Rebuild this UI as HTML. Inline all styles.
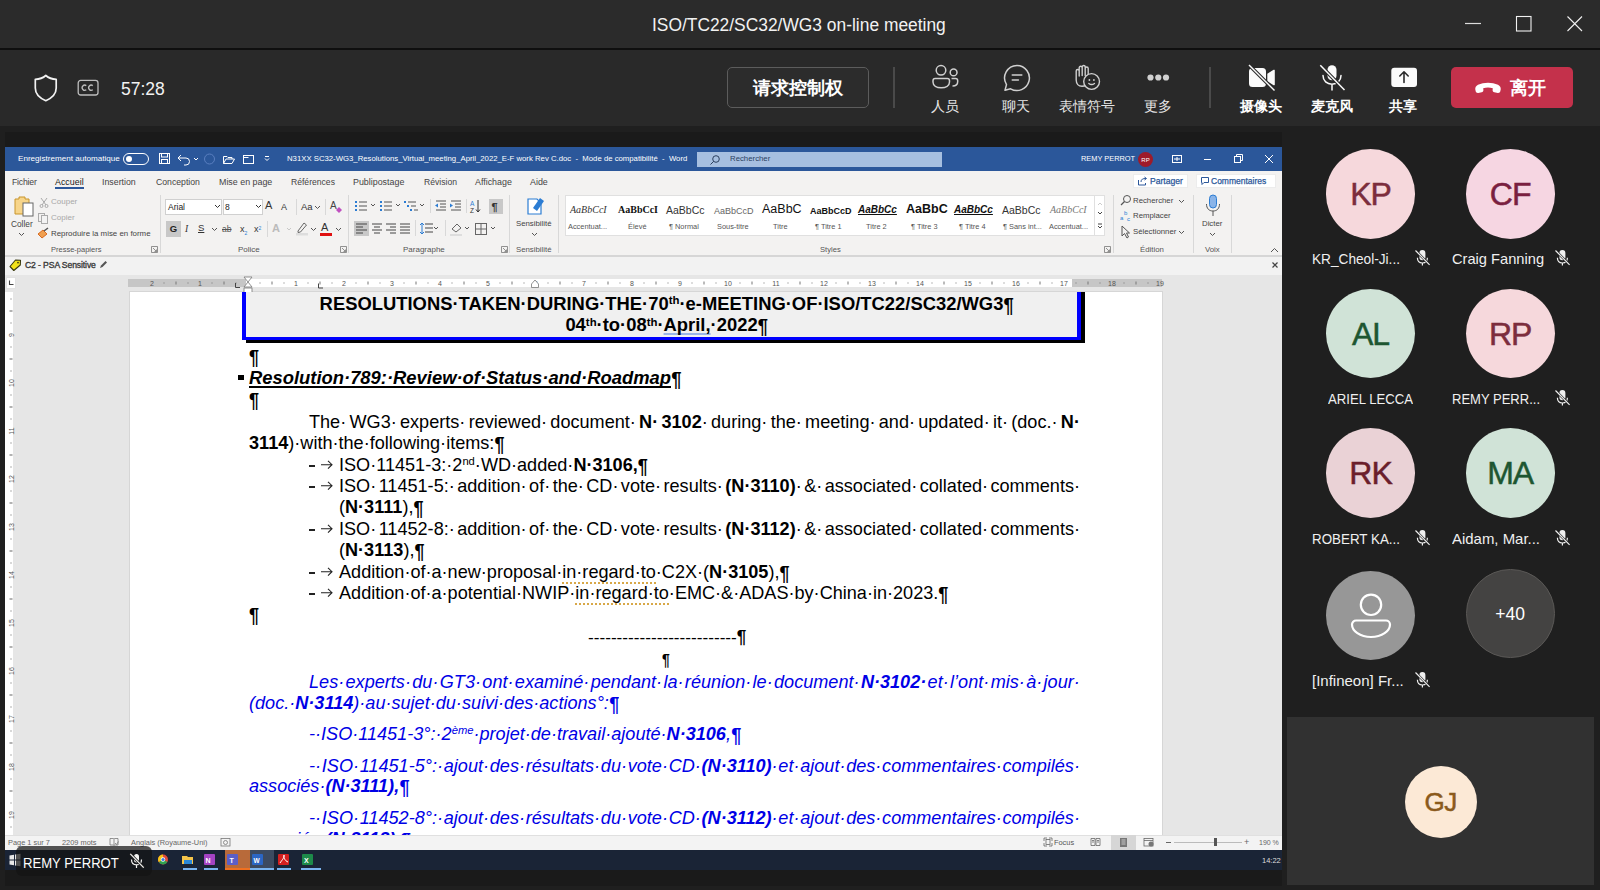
<!DOCTYPE html>
<html><head><meta charset="utf-8">
<style>
*{box-sizing:border-box}
html,body{margin:0;padding:0}
body{width:1600px;height:890px;overflow:hidden;position:relative;background:#1f1f1f;font-family:"Liberation Sans",sans-serif;}
.a{position:absolute}
.pre{white-space:pre}
/* teams */
#tbar{left:0;top:0;width:1600px;height:48px;background:#2b2b2b}
#tsep{left:0;top:48px;width:1600px;height:2px;background:#0f0f0f}
#tool{left:0;top:50px;width:1600px;height:76px;background:#292929}
.tl{color:#e6e6e6;font-size:14px;line-height:14px;text-align:center}
.tlb{color:#fff;font-weight:600}
/* word */
#word{left:5px;top:147px;width:1277px;height:723px;background:#e6e6e6;overflow:hidden}
.w{font-size:9px;line-height:10px;color:#444;white-space:pre}
.doc{font-size:18.1px;line-height:20px;color:#000;white-space:pre}
.blue{color:#0000e6;font-style:italic}
.jl{display:flex;justify-content:space-between}
sup{font-size:0.62em;line-height:0;vertical-align:0;position:relative;top:-0.5em}
.av{border-radius:50%;text-align:center}
.pm{font-weight:bold;display:inline-block;transform:scaleY(1.14);transform-origin:50% 3.4px}
.nm{color:#f0f0f0;font-size:15px;line-height:16px;white-space:pre}
</style></head><body>
<!-- TEAMS TITLE BAR -->
<div id="tbar" class="a"></div>
<div id="tsep" class="a"></div>
<div id="tool" class="a"></div>
<div class="a" style="left:5px;top:132px;width:1277px;height:754px;background:#1a1a1a"></div>
<div class="a pre" style="left:652px;top:15px;font-size:18.3px;line-height:20px;color:#f2f2f2;transform:scaleX(0.951);transform-origin:0 0">ISO/TC22/SC32/WG3 on-line meeting</div>
<svg class="a" style="left:1460px;top:10px" width="130" height="28" viewBox="0 0 130 28">
 <line x1="5" y1="13.5" x2="21" y2="13.5" stroke="#dcdcdc" stroke-width="1.2"/>
 <rect x="56.5" y="6.5" width="14.5" height="14.5" fill="none" stroke="#f0f0f0" stroke-width="1.1"/>
 <path d="M107.5 6.5 L122 21 M122 6.5 L107.5 21" stroke="#f0f0f0" stroke-width="1.1"/>
</svg>
<!-- toolbar left -->
<svg class="a" style="left:33px;top:73px" width="28" height="30" viewBox="0 0 28 30">
 <path d="M12.8 2.5 C10 5 6 6.2 2.3 6.3 V15 C2.3 21 6.5 25 12.8 27.7 C19 25 23.2 21 23.2 15 V6.3 C19.5 6.2 15.6 5 12.8 2.5 Z" fill="none" stroke="#f2f2f2" stroke-width="1.7" stroke-linejoin="round"/>
</svg>
<svg class="a" style="left:76px;top:78px" width="24" height="20" viewBox="0 0 24 20">
 <rect x="2.2" y="2.4" width="19.8" height="14.6" rx="2.5" fill="none" stroke="#bdbdbd" stroke-width="1.3"/>
 <path d="M10.3 7.6 A2.6 2.6 0 1 0 10.3 11.8 M16.8 7.6 A2.6 2.6 0 1 0 16.8 11.8" fill="none" stroke="#bdbdbd" stroke-width="1.3"/>
</svg>
<div class="a pre" style="left:121px;top:80px;font-size:17.5px;line-height:18px;color:#f2f2f2">57:28</div>
<!-- request control button -->
<div class="a" style="left:727px;top:67px;width:142px;height:41px;border:1px solid #5c5c5c;border-radius:5px;background:#2c2c2c"></div>
<div class="a pre" style="left:727px;top:78px;width:142px;text-align:center;font-size:18px;line-height:20px;color:#fff;font-weight:bold">请求控制权</div>
<div class="a" style="left:893px;top:67px;width:2px;height:41px;background:#4a4a4a"></div>
<div class="a" style="left:1209px;top:67px;width:2px;height:41px;background:#4a4a4a"></div>
<!-- people -->
<svg class="a" style="left:930px;top:63px" width="30" height="28" viewBox="0 0 30 28">
 <circle cx="11" cy="7.3" r="4.8" fill="none" stroke="#d0d0d0" stroke-width="1.5"/>
 <path d="M5.2 15.6 H17.3 A2.2 2.2 0 0 1 19.5 17.8 V19 C19.5 22.8 15.8 24.8 11.2 24.8 C6.6 24.8 3 22.8 3 19 V17.8 A2.2 2.2 0 0 1 5.2 15.6 Z" fill="none" stroke="#d0d0d0" stroke-width="1.5"/>
 <circle cx="23.6" cy="9.4" r="3.4" fill="none" stroke="#d0d0d0" stroke-width="1.5"/>
 <path d="M21.5 15.5 H25.5 A2.2 2.2 0 0 1 27.7 17.7 V18.5 C27.7 21.5 25.3 23 22.5 23" fill="none" stroke="#d0d0d0" stroke-width="1.5"/>
</svg>
<div class="a tl pre" style="left:915px;top:99px;width:60px">人员</div>
<!-- chat -->
<svg class="a" style="left:1002px;top:63px" width="30" height="30" viewBox="0 0 30 30">
 <path d="M15 2.5 A12.5 12.5 0 1 1 8.6 25.8 L3 27.3 L4.5 21.6 A12.5 12.5 0 0 1 15 2.5 Z" fill="none" stroke="#d0d0d0" stroke-width="1.5" stroke-linejoin="round"/>
 <path d="M10.3 12 H19.8 M10.3 17 H16.4" stroke="#d0d0d0" stroke-width="1.6" stroke-linecap="round"/>
</svg>
<div class="a tl pre" style="left:986px;top:99px;width:60px">聊天</div>
<!-- reactions -->
<svg class="a" style="left:1073px;top:64px" width="30" height="28" viewBox="0 0 30 28">
 <path d="M3.2 14 V7 A1.5 1.5 0 0 1 6.2 7 V12 V3.8 A1.5 1.5 0 0 1 9.2 3.8 V11.5 V3 A1.5 1.5 0 0 1 12.2 3 V11.5 V4.5 A1.5 1.5 0 0 1 15.2 4.5 V13.5 L17.3 10.8 A1.6 1.6 0 0 1 19.8 12.6 L15.8 19 C14 21.5 11.5 22.3 9 22.3 C5.5 22.3 3.2 19.5 3.2 16 Z" fill="none" stroke="#d0d0d0" stroke-width="1.4" stroke-linejoin="round"/>
 <circle cx="18.6" cy="17.5" r="7.9" fill="#292929" stroke="#d0d0d0" stroke-width="1.4"/>
 <circle cx="16.4" cy="16" r="0.9" fill="#d0d0d0"/><circle cx="20.9" cy="16" r="0.9" fill="#d0d0d0"/>
 <path d="M15.8 19.4 Q18.6 21.6 21.5 19.4" fill="none" stroke="#d0d0d0" stroke-width="1.3" stroke-linecap="round"/>
</svg>
<div class="a tl pre" style="left:1047px;top:99px;width:80px">表情符号</div>
<!-- more -->
<svg class="a" style="left:1144px;top:71px" width="30" height="14" viewBox="0 0 30 14">
 <circle cx="6.5" cy="6.5" r="3.1" fill="#d0d0d0"/><circle cx="14.3" cy="6.5" r="3.1" fill="#d0d0d0"/><circle cx="22" cy="6.5" r="3.1" fill="#d0d0d0"/>
</svg>
<div class="a tl pre" style="left:1128px;top:99px;width:60px">更多</div>
<!-- camera -->
<svg class="a" style="left:1246px;top:63px" width="32" height="30" viewBox="0 0 32 30">
 <path d="M6.5 5 H16.5 A3.5 3.5 0 0 1 20 8.5 V20.5 A3.5 3.5 0 0 1 16.5 24 H6.5 A3.5 3.5 0 0 1 3 20.5 V8.5 A3.5 3.5 0 0 1 6.5 5 Z" fill="#fafafa"/>
 <path d="M21.3 10.8 L27.6 6.8 A0.8 0.8 0 0 1 28.8 7.5 V21.5 A0.8 0.8 0 0 1 27.6 22.2 L21.3 18.2 Z" fill="#fafafa"/>
 <path d="M2.5 1.5 L29 28" stroke="#292929" stroke-width="3.6"/>
 <path d="M3 2 L28.5 27.5" stroke="#fafafa" stroke-width="1.4"/>
</svg>
<div class="a tl tlb pre" style="left:1231px;top:99px;width:60px">摄像头</div>
<!-- mic -->
<svg class="a" style="left:1318px;top:63px" width="32" height="30" viewBox="0 0 32 30">
 <rect x="9.5" y="2.3" width="9" height="15" rx="4.5" fill="#fafafa"/>
 <path d="M5 12.5 C5 18 9 21.2 14 21.2 C19 21.2 23 18 23 12.5 M14 21.2 V27" fill="none" stroke="#fafafa" stroke-width="1.5" stroke-linecap="round"/>
 <path d="M2 2 L27 27.5" stroke="#292929" stroke-width="3.6"/>
 <path d="M2.3 2.3 L26.5 27" stroke="#fafafa" stroke-width="1.5"/>
</svg>
<div class="a tl tlb pre" style="left:1302px;top:99px;width:60px">麦克风</div>
<!-- share -->
<svg class="a" style="left:1389px;top:66px" width="30" height="24" viewBox="0 0 30 24">
 <rect x="2.3" y="1.8" width="25.7" height="19.3" rx="3" fill="#fafafa"/>
 <path d="M15 16.5 V6 M10.8 10 L15 5.8 L19.2 10" fill="none" stroke="#292929" stroke-width="1.6" stroke-linecap="round" stroke-linejoin="round"/>
</svg>
<div class="a tl tlb pre" style="left:1373px;top:99px;width:60px">共享</div>
<!-- leave -->
<div class="a" style="left:1451px;top:67px;width:122px;height:41px;border-radius:5px;background:#c4314b"></div>
<svg class="a" style="left:1473px;top:80px" width="30" height="16" viewBox="0 0 30 16">
 <path d="M2.3 9.5 C2 7.5 3 5.8 5 4.8 C11 2 19 2 25 4.8 C27 5.8 28 7.5 27.7 9.5 L27.3 11.3 C27.1 12.5 26 13.2 24.8 13 L21.3 12.3 C20.2 12.1 19.5 11.1 19.6 10 L19.8 8.3 C16.6 7.3 13.4 7.3 10.2 8.3 L10.4 10 C10.5 11.1 9.8 12.1 8.7 12.3 L5.2 13 C4 13.2 2.9 12.5 2.7 11.3 Z" fill="#fff"/>
</svg>
<div class="a pre" style="left:1510px;top:78px;font-size:18px;line-height:20px;color:#fff;font-weight:bold">离开</div>

<!-- WORD WINDOW -->

<div id="word" class="a"></div>
<!-- word title bar -->
<div class="a" style="left:5px;top:147px;width:1277px;height:24px;background:#2b579a"></div>
<div class="a w" style="left:18px;top:154px;color:#fff;font-size:8.1px">Enregistrement automatique</div>
<div class="a" style="left:123px;top:153px;width:26px;height:12px;border:1px solid #fff;border-radius:6px"></div>
<div class="a" style="left:126px;top:156px;width:6px;height:6px;border-radius:50%;background:#fff"></div>
<svg class="a" style="left:156px;top:151px" width="125" height="16" viewBox="0 0 125 16">
 <g fill="none" stroke="#fff" stroke-width="1">
 <rect x="3.5" y="2.5" width="10" height="10"/><rect x="5.5" y="2.5" width="6" height="3.5"/><rect x="5.5" y="8.5" width="6" height="4"/>
 <path d="M25 4 L22 7 L25 10 M22.5 7 H30 A3.5 3.5 0 0 1 30 14 H28"/>
 <path d="M38 7 L40 9 L42 7"/>
 </g>
 <circle cx="53.5" cy="8" r="5" fill="none" stroke="#5a7fc0" stroke-width="1"/>
 <g fill="none" stroke="#fff" stroke-width="1">
 <path d="M67.5 5.5 V12.5 H76 L78.5 8 H70 L67.5 12.5 M67.5 5.5 H71 L72 6.5 H76 V8"/>
 <rect x="87.5" y="4.5" width="10" height="8"/><path d="M87.5 6.5 H92.5"/>
 </g>
 <path d="M109 5.5 H113 M109 7.5 L111 9.5 L113 7.5" stroke="#fff" stroke-width="1" fill="none"/>
</svg>
<div class="a w" style="left:287px;top:154px;color:#fff;font-size:7.75px">N31XX SC32-WG3_Resolutions_Virtual_meeting_April_2022_E-F work Rev C.doc  -  Mode de compatibilité  -  Word</div>
<div class="a" style="left:697px;top:152px;width:245px;height:15px;background:#a6bfe0"></div>
<svg class="a" style="left:709px;top:154px" width="12" height="12" viewBox="0 0 12 12"><circle cx="7" cy="5" r="3.3" fill="none" stroke="#2b3f5f" stroke-width="1"/><path d="M4.7 7.3 L1.5 10.5" stroke="#2b3f5f" stroke-width="1"/></svg>
<div class="a w" style="left:730px;top:154px;color:#2b3f5f;font-size:7.8px">Rechercher</div>
<div class="a w" style="left:1081px;top:154px;color:#fff;font-size:7.4px">REMY PERROT</div>
<div class="a" style="left:1138px;top:152px;width:15px;height:15px;border-radius:50%;background:#9e1b2a"></div>
<div class="a w" style="left:1138px;top:155px;width:15px;text-align:center;color:#fff;font-size:6px">RP</div>
<svg class="a" style="left:1170px;top:152px" width="110" height="15" viewBox="0 0 110 15">
 <g fill="none" stroke="#fff" stroke-width="1">
 <rect x="2.5" y="3.5" width="9" height="7"/><path d="M4 7 H10 M7 5 V9"/>
 <path d="M34 7.5 H41"/>
 <rect x="64.5" y="4.5" width="6" height="6"/><path d="M66.5 4.5 V2.5 H72.5 V8.5 H70.5"/>
 <path d="M95 3 L103 11 M103 3 L95 11"/>
 </g>
</svg>
<!-- DOC START -->
<div class="a" style="left:5px;top:275px;width:1277px;height:560px;background:#e6e6e6"></div>
<div class="a" style="left:129px;top:291px;width:1034px;height:544px;background:#d6d6d6"></div>
<div class="a" style="left:130px;top:292px;width:1032px;height:543px;background:#fff"></div>
<div class="a" style="left:128px;top:279px;width:1034px;height:8px;background:#fff"></div>
<div class="a" style="left:128px;top:279px;width:118px;height:8px;background:#c6c6c6"></div>
<div class="a" style="left:1072px;top:279px;width:90px;height:8px;background:#c6c6c6"></div>
<svg class="a" style="left:128px;top:279px" width="1038" height="8" viewBox="0 0 1038 8"><text x="24" y="6.5" font-size="7" fill="#555" text-anchor="middle" font-family="Liberation Sans">2</text><rect x="35.5" y="3.5" width="1" height="1" fill="#777"/><rect x="47.5" y="2.5" width="1" height="3" fill="#777"/><rect x="59.5" y="3.5" width="1" height="1" fill="#777"/><text x="72" y="6.5" font-size="7" fill="#555" text-anchor="middle" font-family="Liberation Sans">1</text><rect x="83.5" y="3.5" width="1" height="1" fill="#777"/><rect x="95.5" y="2.5" width="1" height="3" fill="#777"/><rect x="107.5" y="3.5" width="1" height="1" fill="#777"/><rect x="131.5" y="3.5" width="1" height="1" fill="#777"/><rect x="143.5" y="2.5" width="1" height="3" fill="#777"/><rect x="155.5" y="3.5" width="1" height="1" fill="#777"/><text x="168" y="6.5" font-size="7" fill="#555" text-anchor="middle" font-family="Liberation Sans">1</text><rect x="179.5" y="3.5" width="1" height="1" fill="#777"/><rect x="191.5" y="2.5" width="1" height="3" fill="#777"/><rect x="203.5" y="3.5" width="1" height="1" fill="#777"/><text x="216" y="6.5" font-size="7" fill="#555" text-anchor="middle" font-family="Liberation Sans">2</text><rect x="227.5" y="3.5" width="1" height="1" fill="#777"/><rect x="239.5" y="2.5" width="1" height="3" fill="#777"/><rect x="251.5" y="3.5" width="1" height="1" fill="#777"/><text x="264" y="6.5" font-size="7" fill="#555" text-anchor="middle" font-family="Liberation Sans">3</text><rect x="275.5" y="3.5" width="1" height="1" fill="#777"/><rect x="287.5" y="2.5" width="1" height="3" fill="#777"/><rect x="299.5" y="3.5" width="1" height="1" fill="#777"/><text x="312" y="6.5" font-size="7" fill="#555" text-anchor="middle" font-family="Liberation Sans">4</text><rect x="323.5" y="3.5" width="1" height="1" fill="#777"/><rect x="335.5" y="2.5" width="1" height="3" fill="#777"/><rect x="347.5" y="3.5" width="1" height="1" fill="#777"/><text x="360" y="6.5" font-size="7" fill="#555" text-anchor="middle" font-family="Liberation Sans">5</text><rect x="371.5" y="3.5" width="1" height="1" fill="#777"/><rect x="383.5" y="2.5" width="1" height="3" fill="#777"/><rect x="395.5" y="3.5" width="1" height="1" fill="#777"/><text x="408" y="6.5" font-size="7" fill="#555" text-anchor="middle" font-family="Liberation Sans">6</text><rect x="419.5" y="3.5" width="1" height="1" fill="#777"/><rect x="431.5" y="2.5" width="1" height="3" fill="#777"/><rect x="443.5" y="3.5" width="1" height="1" fill="#777"/><text x="456" y="6.5" font-size="7" fill="#555" text-anchor="middle" font-family="Liberation Sans">7</text><rect x="467.5" y="3.5" width="1" height="1" fill="#777"/><rect x="479.5" y="2.5" width="1" height="3" fill="#777"/><rect x="491.5" y="3.5" width="1" height="1" fill="#777"/><text x="504" y="6.5" font-size="7" fill="#555" text-anchor="middle" font-family="Liberation Sans">8</text><rect x="515.5" y="3.5" width="1" height="1" fill="#777"/><rect x="527.5" y="2.5" width="1" height="3" fill="#777"/><rect x="539.5" y="3.5" width="1" height="1" fill="#777"/><text x="552" y="6.5" font-size="7" fill="#555" text-anchor="middle" font-family="Liberation Sans">9</text><rect x="563.5" y="3.5" width="1" height="1" fill="#777"/><rect x="575.5" y="2.5" width="1" height="3" fill="#777"/><rect x="587.5" y="3.5" width="1" height="1" fill="#777"/><text x="600" y="6.5" font-size="7" fill="#555" text-anchor="middle" font-family="Liberation Sans">10</text><rect x="611.5" y="3.5" width="1" height="1" fill="#777"/><rect x="623.5" y="2.5" width="1" height="3" fill="#777"/><rect x="635.5" y="3.5" width="1" height="1" fill="#777"/><text x="648" y="6.5" font-size="7" fill="#555" text-anchor="middle" font-family="Liberation Sans">11</text><rect x="659.5" y="3.5" width="1" height="1" fill="#777"/><rect x="671.5" y="2.5" width="1" height="3" fill="#777"/><rect x="683.5" y="3.5" width="1" height="1" fill="#777"/><text x="696" y="6.5" font-size="7" fill="#555" text-anchor="middle" font-family="Liberation Sans">12</text><rect x="707.5" y="3.5" width="1" height="1" fill="#777"/><rect x="719.5" y="2.5" width="1" height="3" fill="#777"/><rect x="731.5" y="3.5" width="1" height="1" fill="#777"/><text x="744" y="6.5" font-size="7" fill="#555" text-anchor="middle" font-family="Liberation Sans">13</text><rect x="755.5" y="3.5" width="1" height="1" fill="#777"/><rect x="767.5" y="2.5" width="1" height="3" fill="#777"/><rect x="779.5" y="3.5" width="1" height="1" fill="#777"/><text x="792" y="6.5" font-size="7" fill="#555" text-anchor="middle" font-family="Liberation Sans">14</text><rect x="803.5" y="3.5" width="1" height="1" fill="#777"/><rect x="815.5" y="2.5" width="1" height="3" fill="#777"/><rect x="827.5" y="3.5" width="1" height="1" fill="#777"/><text x="840" y="6.5" font-size="7" fill="#555" text-anchor="middle" font-family="Liberation Sans">15</text><rect x="851.5" y="3.5" width="1" height="1" fill="#777"/><rect x="863.5" y="2.5" width="1" height="3" fill="#777"/><rect x="875.5" y="3.5" width="1" height="1" fill="#777"/><text x="888" y="6.5" font-size="7" fill="#555" text-anchor="middle" font-family="Liberation Sans">16</text><rect x="899.5" y="3.5" width="1" height="1" fill="#777"/><rect x="911.5" y="2.5" width="1" height="3" fill="#777"/><rect x="923.5" y="3.5" width="1" height="1" fill="#777"/><text x="936" y="6.5" font-size="7" fill="#555" text-anchor="middle" font-family="Liberation Sans">17</text><rect x="947.5" y="3.5" width="1" height="1" fill="#777"/><rect x="959.5" y="2.5" width="1" height="3" fill="#777"/><rect x="971.5" y="3.5" width="1" height="1" fill="#777"/><text x="984" y="6.5" font-size="7" fill="#555" text-anchor="middle" font-family="Liberation Sans">18</text><rect x="995.5" y="3.5" width="1" height="1" fill="#777"/><rect x="1007.5" y="2.5" width="1" height="3" fill="#777"/><rect x="1019.5" y="3.5" width="1" height="1" fill="#777"/><text x="1032" y="6.5" font-size="7" fill="#555" text-anchor="middle" font-family="Liberation Sans">19</text></svg>
<svg class="a" style="left:530px;top:279px" width="10" height="9" viewBox="0 0 10 9"><path d="M5 1 L8.5 5 V8.5 H1.5 V5 Z" fill="#fff" stroke="#777" stroke-width="0.8"/></svg>
<svg class="a" style="left:233px;top:282px" width="100" height="8" viewBox="0 0 100 8"><path d="M2.5 1 V5.5 H7 M85.5 1.5 V6 H90" fill="none" stroke="#444" stroke-width="1"/></svg>
<svg class="a" style="left:242px;top:276px" width="14" height="18" viewBox="0 0 14 18"><path d="M2 1 H10 L6 6 Z M6 6 L2 11 H10 Z" fill="#fff" stroke="#777" stroke-width="0.8"/><rect x="2" y="12" width="8" height="5" fill="#fff" stroke="#777" stroke-width="0.8"/></svg>
<div class="a" style="left:6px;top:277px;width:10px;height:12px;background:#fff;border:1px solid #e2e2e2"></div>
<svg class="a" style="left:7px;top:279px" width="8" height="8" viewBox="0 0 8 8"><path d="M2.5 1.5 V5.5 H6.5" fill="none" stroke="#444" stroke-width="1.1"/></svg>
<div class="a" style="left:5px;top:292px;width:8px;height:543px;background:#fff"></div>
<svg class="a" style="left:5px;top:292px" width="10" height="543" viewBox="0 0 10 543"><rect x="5.5" y="6.5" width="1" height="1" fill="#666"/><rect x="4.5" y="18.5" width="3" height="1" fill="#666"/><rect x="5.5" y="30.5" width="1" height="1" fill="#666"/><text x="0" y="0" font-size="7" fill="#555" text-anchor="middle" font-family="Liberation Sans" transform="translate(8.5 43) rotate(-90)">9</text><rect x="5.5" y="54.5" width="1" height="1" fill="#666"/><rect x="4.5" y="66.5" width="3" height="1" fill="#666"/><rect x="5.5" y="78.5" width="1" height="1" fill="#666"/><text x="0" y="0" font-size="7" fill="#555" text-anchor="middle" font-family="Liberation Sans" transform="translate(8.5 91) rotate(-90)">10</text><rect x="5.5" y="102.5" width="1" height="1" fill="#666"/><rect x="4.5" y="114.5" width="3" height="1" fill="#666"/><rect x="5.5" y="126.5" width="1" height="1" fill="#666"/><text x="0" y="0" font-size="7" fill="#555" text-anchor="middle" font-family="Liberation Sans" transform="translate(8.5 139) rotate(-90)">11</text><rect x="5.5" y="150.5" width="1" height="1" fill="#666"/><rect x="4.5" y="162.5" width="3" height="1" fill="#666"/><rect x="5.5" y="174.5" width="1" height="1" fill="#666"/><text x="0" y="0" font-size="7" fill="#555" text-anchor="middle" font-family="Liberation Sans" transform="translate(8.5 187) rotate(-90)">12</text><rect x="5.5" y="198.5" width="1" height="1" fill="#666"/><rect x="4.5" y="210.5" width="3" height="1" fill="#666"/><rect x="5.5" y="222.5" width="1" height="1" fill="#666"/><text x="0" y="0" font-size="7" fill="#555" text-anchor="middle" font-family="Liberation Sans" transform="translate(8.5 235) rotate(-90)">13</text><rect x="5.5" y="246.5" width="1" height="1" fill="#666"/><rect x="4.5" y="258.5" width="3" height="1" fill="#666"/><rect x="5.5" y="270.5" width="1" height="1" fill="#666"/><text x="0" y="0" font-size="7" fill="#555" text-anchor="middle" font-family="Liberation Sans" transform="translate(8.5 283) rotate(-90)">14</text><rect x="5.5" y="294.5" width="1" height="1" fill="#666"/><rect x="4.5" y="306.5" width="3" height="1" fill="#666"/><rect x="5.5" y="318.5" width="1" height="1" fill="#666"/><text x="0" y="0" font-size="7" fill="#555" text-anchor="middle" font-family="Liberation Sans" transform="translate(8.5 331) rotate(-90)">15</text><rect x="5.5" y="342.5" width="1" height="1" fill="#666"/><rect x="4.5" y="354.5" width="3" height="1" fill="#666"/><rect x="5.5" y="366.5" width="1" height="1" fill="#666"/><text x="0" y="0" font-size="7" fill="#555" text-anchor="middle" font-family="Liberation Sans" transform="translate(8.5 379) rotate(-90)">16</text><rect x="5.5" y="390.5" width="1" height="1" fill="#666"/><rect x="4.5" y="402.5" width="3" height="1" fill="#666"/><rect x="5.5" y="414.5" width="1" height="1" fill="#666"/><text x="0" y="0" font-size="7" fill="#555" text-anchor="middle" font-family="Liberation Sans" transform="translate(8.5 427) rotate(-90)">17</text><rect x="5.5" y="438.5" width="1" height="1" fill="#666"/><rect x="4.5" y="450.5" width="3" height="1" fill="#666"/><rect x="5.5" y="462.5" width="1" height="1" fill="#666"/><text x="0" y="0" font-size="7" fill="#555" text-anchor="middle" font-family="Liberation Sans" transform="translate(8.5 475) rotate(-90)">18</text><rect x="5.5" y="486.5" width="1" height="1" fill="#666"/><rect x="4.5" y="498.5" width="3" height="1" fill="#666"/><rect x="5.5" y="510.5" width="1" height="1" fill="#666"/><text x="0" y="0" font-size="7" fill="#555" text-anchor="middle" font-family="Liberation Sans" transform="translate(8.5 523) rotate(-90)">19</text><rect x="5.5" y="534.5" width="1" height="1" fill="#666"/></svg>
<div class="a" style="left:246px;top:292px;width:839px;height:51px;background:#000"></div>
<div class="a" style="left:242px;top:292px;width:839px;height:48px;background:#0000ff"></div>
<div class="a" style="left:246px;top:292px;width:831px;height:45px;background:#f0f0f0"></div>
<div class="a doc" style="left:246px;top:293px;width:831px;text-align:center;font-size:18.4px;line-height:22px;font-weight:bold">RESOLUTIONS·TAKEN·DURING·THE·70<sup>th</sup>·e-MEETING·OF·ISO/TC22/SC32/WG3<span class="pm" style="width:0">¶</span></div>
<div class="a doc" style="left:246px;top:314.3px;width:831px;text-align:center;font-size:18.4px;line-height:22px;font-weight:bold">04<sup>th</sup>·to·08<sup>th</sup>·<span style="text-decoration:underline;text-decoration-color:#9bb5e6;text-decoration-thickness:1.6px;text-underline-offset:2.2px;text-decoration-skip-ink:none">April,</span>·2022<span class="pm" style="width:0">¶</span></div>
<div class="a doc" style="left:249px;top:345.7px;"><span class="pm">¶</span></div>
<div class="a" style="left:238.3px;top:374.6px;width:5.3px;height:5px;background:#000"></div>
<div class="a doc" style="left:249px;top:367.5px;"><b><i style="font-size:18.4px"><u style="text-decoration-thickness:1.9px;text-underline-offset:2.4px;text-decoration-skip-ink:none">Resolution·789:·Review·of·Status·and·Roadmap</u><span class="pm">¶</span></i></b></div>
<div class="a doc" style="left:249px;top:388.7px;"><span class="pm">¶</span></div>
<div class="a doc jl" style="left:309px;top:411.7px;width:771px;"><span>The·</span><span>WG3·</span><span>experts·</span><span>reviewed·</span><span>document·</span><span><b>N·</b></span><span><b>3102</b>·</span><span>during·</span><span>the·</span><span>meeting·</span><span>and·</span><span>updated·</span><span>it·</span><span>(doc.·</span><span><b>N·</b></span></div>
<div class="a doc" style="left:249px;top:433.2px;"><b>3114</b>)·with·the·following·items:<span class="pm">¶</span></div>
<div class="a" style="left:309px;top:465px;width:5.6px;height:1.6px;background:#222"></div><svg class="a" style="left:320px;top:459.9px" width="14" height="10" viewBox="0 0 14 10"><path d="M1 4.7 H12 M8 0.8 L12 4.7 L8 8.6" fill="none" stroke="#222" stroke-width="1.1"/></svg>
<div class="a doc" style="left:339px;top:454.6px;">ISO·11451-3:·2<sup>nd</sup>·WD·added·<b>N·3106,</b><span class="pm">¶</span></div>
<div class="a" style="left:309px;top:486px;width:5.6px;height:1.6px;background:#222"></div><svg class="a" style="left:320px;top:481.3px" width="14" height="10" viewBox="0 0 14 10"><path d="M1 4.7 H12 M8 0.8 L12 4.7 L8 8.6" fill="none" stroke="#222" stroke-width="1.1"/></svg>
<div class="a doc jl" style="left:339px;top:476.0px;width:741px;"><span>ISO·</span><span>11451-5:·</span><span>addition·</span><span>of·</span><span>the·</span><span>CD·</span><span>vote·</span><span>results·</span><span><b>(N·3110)</b>·</span><span>&amp;·</span><span>associated·</span><span>collated·</span><span>comments·</span></div>
<div class="a doc" style="left:339px;top:497.4px;">(<b>N·3111</b>),<span class="pm">¶</span></div>
<div class="a" style="left:309px;top:529px;width:5.6px;height:1.6px;background:#222"></div><svg class="a" style="left:320px;top:524.1px" width="14" height="10" viewBox="0 0 14 10"><path d="M1 4.7 H12 M8 0.8 L12 4.7 L8 8.6" fill="none" stroke="#222" stroke-width="1.1"/></svg>
<div class="a doc jl" style="left:339px;top:518.8px;width:741px;"><span>ISO·</span><span>11452-8:·</span><span>addition·</span><span>of·</span><span>the·</span><span>CD·</span><span>vote·</span><span>results·</span><span><b>(N·3112)</b>·</span><span>&amp;·</span><span>associated·</span><span>collated·</span><span>comments·</span></div>
<div class="a doc" style="left:339px;top:540.2px;">(<b>N·3113</b>),<span class="pm">¶</span></div>
<div class="a" style="left:309px;top:572px;width:5.6px;height:1.6px;background:#222"></div><svg class="a" style="left:320px;top:566.9px" width="14" height="10" viewBox="0 0 14 10"><path d="M1 4.7 H12 M8 0.8 L12 4.7 L8 8.6" fill="none" stroke="#222" stroke-width="1.1"/></svg>
<div class="a doc" style="left:339px;top:561.6px;">Addition·of·a·new·proposal·<span style="border-bottom:2px dotted #d8a848">in·regard·to</span>·C2X·(<b>N·3105</b>),<span class="pm">¶</span></div>
<div class="a" style="left:309px;top:593px;width:5.6px;height:1.6px;background:#222"></div><svg class="a" style="left:320px;top:588.3px" width="14" height="10" viewBox="0 0 14 10"><path d="M1 4.7 H12 M8 0.8 L12 4.7 L8 8.6" fill="none" stroke="#222" stroke-width="1.1"/></svg>
<div class="a doc" style="left:339px;top:583.0px;">Addition·of·a·potential·NWIP·<span style="border-bottom:2px dotted #d8a848">in·regard·to</span>·EMC·&amp;·ADAS·by·China·in·2023.<span class="pm">¶</span></div>
<div class="a doc" style="left:249px;top:604.4px;"><span class="pm">¶</span></div>
<div class="a doc" style="left:588px;top:626.7px;font-size:17.2px">--------------------------<span class="pm" style="transform:scaleY(1.02)">¶</span></div>
<div class="a doc" style="left:662px;top:649.2px;font-size:14px"><span class="pm">¶</span></div>
<div class="a doc jl" style="left:309px;top:671.7px;width:771px;color:#0000e6;font-style:italic"><span>Les·</span><span>experts·</span><span>du·</span><span>GT3·</span><span>ont·</span><span>examiné·</span><span>pendant·</span><span>la·</span><span>réunion·</span><span>le·</span><span>document·</span><span><b>N·3102·</b></span><span>et·</span><span>l’ont·</span><span>mis·</span><span>à·</span><span>jour·</span></div>
<div class="a doc" style="left:249px;top:693.0px;color:#0000e6;font-style:italic">(doc.·<b>N·3114</b>)·au·sujet·du·suivi·des·actions°:<span class="pm">¶</span></div>
<div class="a doc" style="left:309px;top:723.7px;color:#0000e6;font-style:italic">-·ISO·11451-3°:·2<sup>ème</sup>·projet·de·travail·ajouté·<b>N·3106</b>,<span class="pm">¶</span></div>
<div class="a doc jl" style="left:309px;top:755.5px;width:771px;color:#0000e6;font-style:italic"><span>-·</span><span>ISO·</span><span>11451-5°:·</span><span>ajout·</span><span>des·</span><span>résultats·</span><span>du·</span><span>vote·</span><span>CD·</span><span><b>(N·3110)</b>·</span><span>et·</span><span>ajout·</span><span>des·</span><span>commentaires·</span><span>compilés·</span></div>
<div class="a doc" style="left:249px;top:776.1px;color:#0000e6;font-style:italic">associés·<b>(N·3111),<span class="pm">¶</span></b></div>
<div class="a doc jl" style="left:309px;top:808.0px;width:771px;color:#0000e6;font-style:italic"><span>-·</span><span>ISO·</span><span>11452-8°:·</span><span>ajout·</span><span>des·</span><span>résultats·</span><span>du·</span><span>vote·</span><span>CD·</span><span><b>(N·3112)</b>·</span><span>et·</span><span>ajout·</span><span>des·</span><span>commentaires·</span><span>compilés·</span></div>
<div class="a doc" style="left:249px;top:829.2px;color:#0000e6;font-style:italic"><span style="color:transparent">asso</span>ciés·<b>(N·3113),<span class="pm">¶</span></b></div>
<!-- DOC END -->
<!-- tabs & ribbon background -->
<div class="a" style="left:5px;top:171px;width:1277px;height:85px;background:#f3f2f1"></div>
<div class="a" style="left:5px;top:255px;width:1277px;height:2px;background:#d6d6d6"></div>
<div class="a" style="left:5px;top:257px;width:1277px;height:18px;background:#f2f2f2"></div>



<!-- tabs -->
<div class="a w" style="left:12px;top:177px;font-size:8.7px;letter-spacing:-0.2px">Fichier</div>
<div class="a w" style="left:55px;top:177px;font-size:8.9px;color:#222">Accueil</div>
<div class="a" style="left:55px;top:187px;width:29px;height:2px;background:#2b579a"></div>
<div class="a w" style="left:102px;top:177px;font-size:8.8px">Insertion</div>
<div class="a w" style="left:156px;top:177px;font-size:8.7px">Conception</div>
<div class="a w" style="left:219px;top:177px;font-size:8.9px">Mise en page</div>
<div class="a w" style="left:291px;top:177px;font-size:8.6px">Références</div>
<div class="a w" style="left:353px;top:177px;font-size:8.9px">Publipostage</div>
<div class="a w" style="left:424px;top:177px;font-size:8.6px">Révision</div>
<div class="a w" style="left:475px;top:177px;font-size:8.9px">Affichage</div>
<div class="a w" style="left:530px;top:177px;font-size:8.9px">Aide</div>
<!-- share / comments buttons -->
<div class="a" style="left:1133px;top:174px;width:55px;height:14px;background:#fff;border:1px solid #ececec"></div>
<svg class="a" style="left:1137px;top:176px" width="11" height="10" viewBox="0 0 11 10"><path d="M1.5 4 V9 H8.5 V7 M4 6 C4 3 6 2.5 9 2.5 M7.5 1 L9.5 2.5 L7.5 4" fill="none" stroke="#2b579a" stroke-width="1"/></svg>
<div class="a w" style="left:1150px;top:176px;font-size:8.6px;color:#2b579a;-webkit-text-stroke:0.25px #2b579a">Partager</div>
<div class="a" style="left:1196px;top:174px;width:80px;height:14px;background:#fff;border:1px solid #ececec"></div>
<svg class="a" style="left:1200px;top:176px" width="10" height="10" viewBox="0 0 10 10"><path d="M1.5 1.5 H8.5 V6.5 H4 L2 8.5 V6.5 H1.5 Z" fill="none" stroke="#2b579a" stroke-width="1"/></svg>
<div class="a w" style="left:1211px;top:176px;font-size:8.5px;color:#2b579a;-webkit-text-stroke:0.25px #2b579a">Commentaires</div>

<!-- clipboard group -->
<svg class="a" style="left:11px;top:194px" width="26" height="26" viewBox="0 0 26 26">
 <path d="M4 5 H8 V3 H14 V5 H18 V20 H4 Z" fill="#f7d58a" stroke="#c8952a" stroke-width="1"/>
 <rect x="12" y="9" width="10" height="13" fill="#fff" stroke="#666" stroke-width="1"/>
</svg>
<div class="a w" style="left:11px;top:219px;font-size:8.3px">Coller</div>
<svg class="a" style="left:18px;top:232px" width="7" height="5" viewBox="0 0 7 5"><path d="M1 1 L3.5 3.5 L6 1" fill="none" stroke="#555" stroke-width="1"/></svg>
<svg class="a" style="left:39px;top:197px" width="10" height="11" viewBox="0 0 10 11"><path d="M2 1 L7 8 M8 1 L3 8" stroke="#aaa" stroke-width="1" fill="none"/><circle cx="2.5" cy="9" r="1.5" fill="none" stroke="#aaa"/><circle cx="7.5" cy="9" r="1.5" fill="none" stroke="#aaa"/></svg>
<div class="a w" style="left:51px;top:197px;font-size:8px;color:#a8a8a8">Couper</div>
<svg class="a" style="left:37px;top:212px" width="12" height="12" viewBox="0 0 12 12"><rect x="1.5" y="1.5" width="6" height="8" fill="none" stroke="#aaa"/><rect x="4.5" y="3.5" width="6" height="8" fill="#f3f3f3" stroke="#aaa"/></svg>
<div class="a w" style="left:51px;top:213px;font-size:8px;color:#a8a8a8">Copier</div>
<svg class="a" style="left:37px;top:227px" width="13" height="12" viewBox="0 0 13 12"><path d="M1 7 L6 3 L10 7 L5 11 Z" fill="#f0a050" stroke="#d86a20"/><path d="M7 4 L11 1" stroke="#555" stroke-width="1.5"/></svg>
<div class="a w" style="left:51px;top:229px;font-size:7.9px">Reproduire la mise en forme</div>
<div class="a w" style="left:51px;top:245px;font-size:7.5px;color:#555">Presse-papiers</div>
<svg class="a" style="left:151px;top:246px" width="7" height="7" viewBox="0 0 7 7"><path d="M0.5 0.5 H6.5 V6.5 H0.5 Z M2 2 L5.5 5.5 M5.5 3.5 V5.5 H3.5" fill="none" stroke="#777" stroke-width="0.8"/></svg>
<div class="a" style="left:160px;top:195px;width:1px;height:58px;background:#d8d8d8"></div>

<!-- font group -->
<div class="a" style="left:165px;top:199px;width:57px;height:16px;background:#fff;border:1px solid #d0d0d0"></div>
<div class="a w" style="left:168px;top:202px;font-size:8.5px;color:#222">Arial</div>
<svg class="a" style="left:214px;top:204px" width="7" height="5" viewBox="0 0 7 5"><path d="M1 1 L3.5 3.5 L6 1" fill="none" stroke="#333" stroke-width="1"/></svg>
<div class="a" style="left:223px;top:199px;width:40px;height:16px;background:#fff;border:1px solid #d0d0d0"></div>
<div class="a w" style="left:225px;top:202px;font-size:8.5px;color:#222">8</div>
<svg class="a" style="left:255px;top:204px" width="7" height="5" viewBox="0 0 7 5"><path d="M1 1 L3.5 3.5 L6 1" fill="none" stroke="#333" stroke-width="1"/></svg>
<div class="a w" style="left:265px;top:199px;font-size:11px;line-height:12px;color:#333">A</div>
<div class="a w" style="left:281px;top:201px;font-size:9px;line-height:12px;color:#333">A</div>
<div class="a" style="left:296px;top:199px;width:1px;height:16px;background:#d8d8d8"></div>
<div class="a w" style="left:301px;top:201px;font-size:9.5px;line-height:12px;color:#333">Aa</div>
<svg class="a" style="left:314px;top:205px" width="7" height="5" viewBox="0 0 7 5"><path d="M1 1 L3.5 3.5 L6 1" fill="none" stroke="#555" stroke-width="1"/></svg>
<div class="a" style="left:325px;top:199px;width:1px;height:16px;background:#d8d8d8"></div>
<div class="a w" style="left:330px;top:200px;font-size:10px;line-height:12px;color:#444">A</div>
<svg class="a" style="left:335px;top:206px" width="8" height="7" viewBox="0 0 8 7"><path d="M1 4 L4 1 L7 4 L4 7 Z" fill="#c050c0"/></svg>
<div class="a" style="left:166px;top:221px;width:15px;height:16px;background:#c8c8c8"></div>
<div class="a w" style="left:166px;top:224px;width:15px;text-align:center;font-size:9.5px;line-height:10px;font-weight:bold;color:#222">G</div>
<div class="a w" style="left:185px;top:224px;font-size:9.5px;line-height:10px;font-style:italic;color:#333;font-family:'Liberation Serif'">I</div>
<div class="a w" style="left:198px;top:223px;font-size:9.5px;line-height:10px;color:#333;text-decoration:underline">S</div>
<svg class="a" style="left:211px;top:227px" width="7" height="5" viewBox="0 0 7 5"><path d="M1 1 L3.5 3.5 L6 1" fill="none" stroke="#555" stroke-width="1"/></svg>
<div class="a w" style="left:222px;top:224px;font-size:8.5px;line-height:10px;color:#555;text-decoration:line-through">ab</div>
<div class="a w" style="left:240px;top:224px;font-size:9px;line-height:10px;color:#333">x<sub style="font-size:5px;color:#2b7cd3">2</sub></div>
<div class="a w" style="left:254px;top:224px;font-size:9px;line-height:10px;color:#333">x<sup style="font-size:5px;color:#2b7cd3">2</sup></div>
<div class="a" style="left:267px;top:221px;width:1px;height:16px;background:#d8d8d8"></div>
<div class="a w" style="left:272px;top:222px;font-size:11px;line-height:12px;color:#bbb;font-weight:bold">A</div>
<svg class="a" style="left:286px;top:227px" width="6" height="4" viewBox="0 0 6 4"><path d="M1 1 L3 3 L5 1" fill="none" stroke="#bbb" stroke-width="0.8"/></svg>
<svg class="a" style="left:295px;top:220px" width="14" height="16" viewBox="0 0 14 16"><path d="M3 11 L9 3 L11.5 5 L5.5 12 L3 12.5 Z" fill="none" stroke="#666" stroke-width="1"/><rect x="1" y="13" width="12" height="2.5" fill="#ddd"/></svg>
<svg class="a" style="left:310px;top:227px" width="7" height="5" viewBox="0 0 7 5"><path d="M1 1 L3.5 3.5 L6 1" fill="none" stroke="#555" stroke-width="1"/></svg>
<div class="a w" style="left:321px;top:221px;font-size:11px;line-height:12px;color:#333">A</div>
<div class="a" style="left:320px;top:233px;width:12px;height:2.5px;background:#e01010"></div>
<svg class="a" style="left:335px;top:227px" width="7" height="5" viewBox="0 0 7 5"><path d="M1 1 L3.5 3.5 L6 1" fill="none" stroke="#555" stroke-width="1"/></svg>
<div class="a w" style="left:238px;top:245px;font-size:8px;color:#555">Police</div>
<svg class="a" style="left:340px;top:246px" width="7" height="7" viewBox="0 0 7 7"><path d="M0.5 0.5 H6.5 V6.5 H0.5 Z M2 2 L5.5 5.5 M5.5 3.5 V5.5 H3.5" fill="none" stroke="#777" stroke-width="0.8"/></svg>
<div class="a" style="left:348px;top:195px;width:1px;height:58px;background:#d8d8d8"></div>

<!-- paragraph group -->
<svg class="a" style="left:352px;top:197px" width="160" height="44" viewBox="0 0 160 44">
 <g fill="#2b7cd3"><rect x="3" y="4" width="2" height="2"/><rect x="3" y="8" width="2" height="2"/><rect x="3" y="12" width="2" height="2"/>
 <rect x="28" y="4" width="2" height="2"/><rect x="28" y="8" width="2" height="2"/><rect x="28" y="12" width="2" height="2"/>
 <rect x="52" y="4" width="2" height="2"/><rect x="55" y="8" width="2" height="2"/><rect x="58" y="12" width="2" height="2"/></g>
 <g stroke="#555" stroke-width="1"><path d="M7 5 H15 M7 9 H15 M7 13 H15 M32 5 H40 M32 9 H40 M32 13 H40 M56 5 H64 M59 9 H64 M62 13 H66"/>
 <path d="M19 7 L21 9 L23 7 M44 7 L46 9 L48 7 M68 7 L70 9 L72 7" fill="none"/>
 <path d="M84 4 H94 M88 7 H94 M88 10 H94 M84 13 H94 M99 4 H109 M103 7 H109 M103 10 H109 M99 13 H109"/>
 </g>
 <path d="M83 8.5 L86 6.5 V10.5 Z" fill="#2b7cd3"/><path d="M101 8.5 L98 6.5 V10.5 Z" fill="#2b7cd3"/>
 <rect x="78" y="2" width="1" height="14" fill="#d8d8d8"/><rect x="114" y="2" width="1" height="14" fill="#d8d8d8"/>
 <text x="118" y="9" font-size="6.5" fill="#2b7cd3" font-family="Liberation Sans">A</text><text x="118" y="16" font-size="6.5" fill="#333" font-family="Liberation Sans">Z</text>
 <path d="M126 3 V15 M124 12.5 L126 15 L128 12.5" stroke="#333" fill="none" stroke-width="1"/>
 <rect x="137" y="2" width="14" height="15" fill="#c8c8c8"/>
 <text x="139.5" y="13.5" font-size="11" fill="#333" font-family="Liberation Sans" font-weight="bold">¶</text>
 <rect x="2" y="24" width="15" height="15" fill="#c8c8c8"/>
 <g stroke="#444" stroke-width="1"><path d="M4 27 H15 M4 30 H11 M4 33 H15 M4 36 H11"/>
 <path d="M20 27 H30 M22 30 H28 M20 33 H30 M22 36 H28"/>
 <path d="M34 27 H44 M38 30 H44 M34 33 H44 M38 36 H44"/>
 <path d="M48 27 H58 M48 30 H58 M48 33 H58 M48 36 H58"/>
 <path d="M73 27 H81 M73 31 H81 M73 35 H81"/></g>
 <rect x="63" y="23" width="1" height="16" fill="#d8d8d8"/>
 <path d="M70 26 V37 M68 28 L70 26 L72 28 M68 35 L70 37 L72 35" stroke="#2b7cd3" fill="none" stroke-width="1"/>
 <path d="M82 30 L84 32 L86 30" stroke="#555" fill="none"/>
 <rect x="93" y="23" width="1" height="16" fill="#d8d8d8"/>
 <path d="M100 32 L105 27 L109 31 L104 35 Z" fill="none" stroke="#666"/><rect x="98" y="37" width="12" height="2" fill="#ddd"/>
 <path d="M113 30 L115 32 L117 30" stroke="#555" fill="none"/>
 <rect x="123.5" y="26.5" width="11" height="11" fill="none" stroke="#666"/><path d="M129 26.5 V37.5 M123.5 32 H134.5" stroke="#666"/>
 <path d="M139 30 L141 32 L143 30" stroke="#555" fill="none"/>
</svg>
<div class="a w" style="left:403px;top:245px;font-size:8px;color:#555">Paragraphe</div>
<svg class="a" style="left:501px;top:246px" width="7" height="7" viewBox="0 0 7 7"><path d="M0.5 0.5 H6.5 V6.5 H0.5 Z M2 2 L5.5 5.5 M5.5 3.5 V5.5 H3.5" fill="none" stroke="#777" stroke-width="0.8"/></svg>
<div class="a" style="left:509px;top:195px;width:1px;height:58px;background:#d8d8d8"></div>
<!-- sensitivity -->
<svg class="a" style="left:525px;top:194px" width="22" height="22" viewBox="0 0 22 22">
 <path d="M3 5 H12 L16 9 V20 H3 Z" fill="#fff" stroke="#2b7cd3" stroke-width="1.2"/>
 <path d="M8 14 L15 4 L19 7 L12 17 Z" fill="#2b7cd3"/>
</svg>
<div class="a w" style="left:516px;top:219px;font-size:7.8px">Sensibilité</div>
<svg class="a" style="left:531px;top:232px" width="7" height="5" viewBox="0 0 7 5"><path d="M1 1 L3.5 3.5 L6 1" fill="none" stroke="#555" stroke-width="1"/></svg>
<div class="a w" style="left:516px;top:245px;font-size:7.8px;color:#555">Sensibilité</div>
<div class="a" style="left:558px;top:195px;width:1px;height:58px;background:#d8d8d8"></div>
<!-- styles gallery -->
<div class="a" style="left:565px;top:195px;width:540px;height:41px;background:#fff;border:1px solid #e0e0e0"></div>
<div class="a w" style="left:570px;top:204px;font-size:10px;line-height:12px;font-family:'Liberation Serif';font-style:italic;color:#333">AaBbCcI</div>
<div class="a w" style="left:618px;top:204px;font-size:10px;line-height:12px;font-family:'Liberation Serif';font-weight:bold;color:#111">AaBbCcI</div>
<div class="a w" style="left:666px;top:204px;font-size:10.5px;line-height:12px;color:#333">AaBbCc</div>
<div class="a w" style="left:714px;top:205px;font-size:9px;line-height:12px;color:#666">AaBbCcD</div>
<div class="a w" style="left:762px;top:202px;font-size:12.5px;line-height:14px;color:#111">AaBbC</div>
<div class="a w" style="left:810px;top:205px;font-size:9px;line-height:12px;font-weight:bold;color:#111">AaBbCcD</div>
<div class="a w" style="left:858px;top:204px;font-size:10px;line-height:12px;font-weight:bold;font-style:italic;text-decoration:underline;color:#111">AaBbCc</div>
<div class="a w" style="left:906px;top:202px;font-size:12.5px;line-height:14px;font-weight:bold;color:#111">AaBbC</div>
<div class="a w" style="left:954px;top:204px;font-size:10px;line-height:12px;font-weight:bold;font-style:italic;text-decoration:underline;color:#111">AaBbCc</div>
<div class="a w" style="left:1002px;top:204px;font-size:10.5px;line-height:12px;color:#333">AaBbCc</div>
<div class="a w" style="left:1050px;top:204px;font-size:10px;line-height:12px;font-family:'Liberation Serif';font-style:italic;color:#777">AaBbCcI</div>
<div class="a w" style="left:568px;top:222px;font-size:7.4px;color:#555">Accentuat...</div>
<div class="a w" style="left:628px;top:222px;font-size:7.4px;color:#555">Élevé</div>
<div class="a w" style="left:669px;top:222px;font-size:7.4px;color:#555">¶ Normal</div>
<div class="a w" style="left:717px;top:222px;font-size:7.4px;color:#555">Sous-titre</div>
<div class="a w" style="left:773px;top:222px;font-size:7.4px;color:#555">Titre</div>
<div class="a w" style="left:815px;top:222px;font-size:7.4px;color:#555">¶ Titre 1</div>
<div class="a w" style="left:866px;top:222px;font-size:7.4px;color:#555">Titre 2</div>
<div class="a w" style="left:911px;top:222px;font-size:7.4px;color:#555">¶ Titre 3</div>
<div class="a w" style="left:959px;top:222px;font-size:7.4px;color:#555">¶ Titre 4</div>
<div class="a w" style="left:1003px;top:222px;font-size:7.4px;color:#555">¶ Sans int...</div>
<div class="a w" style="left:1049px;top:222px;font-size:7.4px;color:#555">Accentuat...</div>
<div class="a" style="left:1094px;top:196px;width:1px;height:39px;background:#e0e0e0"></div>
<svg class="a" style="left:1095px;top:196px" width="10" height="39" viewBox="0 0 10 39">
 <path d="M3 9 L5 7 L7 9" stroke="#ccc" fill="none"/><path d="M3 16 L5 18 L7 16" stroke="#444" fill="none"/>
 <path d="M3 28 H7 M3 30 L5 32 L7 30" stroke="#444" fill="none"/>
</svg>
<div class="a w" style="left:820px;top:245px;font-size:7.6px;color:#555">Styles</div>
<svg class="a" style="left:1104px;top:246px" width="7" height="7" viewBox="0 0 7 7"><path d="M0.5 0.5 H6.5 V6.5 H0.5 Z M2 2 L5.5 5.5 M5.5 3.5 V5.5 H3.5" fill="none" stroke="#777" stroke-width="0.8"/></svg>
<div class="a" style="left:1113px;top:195px;width:1px;height:58px;background:#d8d8d8"></div>
<!-- editing -->
<svg class="a" style="left:1119px;top:194px" width="14" height="46" viewBox="0 0 14 46">
 <circle cx="8" cy="5" r="3.5" fill="none" stroke="#555"/><path d="M5.5 7.5 L2 11" stroke="#555" stroke-width="1.2"/>
 <text x="5" y="21" font-size="6" fill="#2b7cd3" font-family="Liberation Sans">b</text><text x="1" y="26" font-size="6" fill="#2b7cd3" font-family="Liberation Sans">a</text><text x="8" y="27" font-size="6" fill="#2b7cd3" font-family="Liberation Sans">c</text>
 <path d="M3 32 V42 L5.5 39.5 L8 44 L9.5 43 L7.5 39 H10.5 Z" fill="none" stroke="#555"/>
</svg>
<div class="a w" style="left:1133px;top:196px;font-size:7.8px">Rechercher</div>
<svg class="a" style="left:1178px;top:199px" width="7" height="5" viewBox="0 0 7 5"><path d="M1 1 L3.5 3.5 L6 1" fill="none" stroke="#555" stroke-width="1"/></svg>
<div class="a w" style="left:1133px;top:211px;font-size:7.8px">Remplacer</div>
<div class="a w" style="left:1133px;top:227px;font-size:7.8px">Sélectionner</div>
<svg class="a" style="left:1178px;top:230px" width="7" height="5" viewBox="0 0 7 5"><path d="M1 1 L3.5 3.5 L6 1" fill="none" stroke="#555" stroke-width="1"/></svg>
<div class="a w" style="left:1140px;top:245px;font-size:7.8px;color:#555">Édition</div>
<div class="a" style="left:1193px;top:195px;width:1px;height:58px;background:#d8d8d8"></div>
<!-- dictate -->
<svg class="a" style="left:1204px;top:194px" width="18" height="24" viewBox="0 0 18 24">
 <rect x="5.5" y="1" width="7" height="13" rx="3.5" fill="#8ab4e8" stroke="#2b7cd3" stroke-width="1"/>
 <path d="M2.5 10 C2.5 14.5 5 17 9 17 C13 17 15.5 14.5 15.5 10 M9 17 V22" fill="none" stroke="#555" stroke-width="1"/>
</svg>
<div class="a w" style="left:1202px;top:219px;font-size:7.8px">Dicter</div>
<svg class="a" style="left:1209px;top:232px" width="7" height="5" viewBox="0 0 7 5"><path d="M1 1 L3.5 3.5 L6 1" fill="none" stroke="#555" stroke-width="1"/></svg>
<div class="a w" style="left:1205px;top:245px;font-size:7.8px;color:#555">Voix</div>
<div class="a" style="left:1231px;top:195px;width:1px;height:58px;background:#d8d8d8"></div>
<svg class="a" style="left:1270px;top:247px" width="9" height="6" viewBox="0 0 9 6"><path d="M1 5 L4.5 1.5 L8 5" fill="none" stroke="#555" stroke-width="1"/></svg>
<!-- sensitivity bar -->
<svg class="a" style="left:8px;top:258px" width="14" height="14" viewBox="0 0 14 14"><path d="M2 8.5 L7.5 2 L12.5 2.2 L12.3 7 L5.8 12.5 Z" fill="#f2e21a" stroke="#3a3a10" stroke-width="1.1" stroke-linejoin="round"/><circle cx="10" cy="4.6" r="0.9" fill="#3a3a10"/></svg>
<div class="a w" style="left:25px;top:260px;font-size:8.6px;color:#3a3a3a;-webkit-text-stroke:0.35px #3a3a3a;letter-spacing:-0.1px">C2 - PSA Sensitive</div>
<svg class="a" style="left:99px;top:260px" width="9" height="9" viewBox="0 0 9 9"><path d="M1 8 L2 5.5 L6.5 1 L8 2.5 L3.5 7 Z" fill="#555"/></svg>
<svg class="a" style="left:1271px;top:261px" width="8" height="8" viewBox="0 0 8 8"><path d="M1.5 1.5 L6.5 6.5 M6.5 1.5 L1.5 6.5" stroke="#444" stroke-width="1.2"/></svg>

<!-- status bar -->
<div class="a" style="left:5px;top:835px;width:1277px;height:15px;background:#f3f3f3;border-top:1px solid #e0e0e0"></div>
<div class="a w" style="left:8px;top:838px;font-size:7.4px;color:#666">Page 1 sur 7</div>
<div class="a w" style="left:62px;top:838px;font-size:7.4px;color:#666">2209 mots</div>
<svg class="a" style="left:109px;top:837px" width="10" height="10" viewBox="0 0 10 10"><path d="M1 1.5 H4.5 L5 2 L5.5 1.5 H9 V8 H5.5 L5 8.5 L4.5 8 H1 Z M5 2 V8.5" fill="none" stroke="#777" stroke-width="0.8"/><path d="M6 6 L7.5 7.5 L9.5 4.5" fill="none" stroke="#777" stroke-width="0.8"/></svg>
<div class="a w" style="left:131px;top:838px;font-size:7.4px;color:#666">Anglais (Royaume-Uni)</div>
<svg class="a" style="left:220px;top:837px" width="11" height="10" viewBox="0 0 11 10"><rect x="1" y="1.5" width="9" height="7.5" fill="none" stroke="#777" stroke-width="0.8"/><circle cx="5.5" cy="5.5" r="2" fill="none" stroke="#777" stroke-width="0.8"/></svg>
<svg class="a" style="left:1042px;top:836px" width="12" height="12" viewBox="0 0 12 12"><path d="M2 2 H5 M2 2 V5 M10 2 H7 M10 2 V5 M2 10 H5 M2 10 V7 M10 10 H7 M10 10 V7" fill="none" stroke="#666" stroke-width="0.8"/><rect x="4" y="3.5" width="4" height="5" fill="none" stroke="#666" stroke-width="0.8"/></svg>
<div class="a w" style="left:1054px;top:838px;font-size:7.4px;color:#555">Focus</div>
<svg class="a" style="left:1090px;top:837px" width="11" height="10" viewBox="0 0 11 10"><path d="M1 1.5 H5 V8.5 H1 Z M6 1.5 H10 V8.5 H6 Z M2 3.5 H4 M2 5 H4 M7 3.5 H9 M7 5 H9" fill="none" stroke="#666" stroke-width="0.8"/></svg>
<div class="a" style="left:1111px;top:835px;width:25px;height:15px;background:#d6d6d6"></div>
<svg class="a" style="left:1118px;top:837px" width="11" height="11" viewBox="0 0 11 11"><rect x="2" y="1" width="7" height="9" fill="#777"/><path d="M3.5 3 H7.5 M3.5 5 H7.5 M3.5 7 H7.5" stroke="#ddd" stroke-width="0.8"/></svg>
<svg class="a" style="left:1143px;top:837px" width="12" height="11" viewBox="0 0 12 11"><rect x="1" y="1.5" width="9" height="7.5" fill="none" stroke="#666" stroke-width="0.8"/><circle cx="8" cy="7" r="2.5" fill="#777"/><path d="M1 3.5 H10" stroke="#666" stroke-width="0.8"/></svg>
<div class="a" style="left:1166px;top:842px;width:5px;height:1px;background:#666"></div>
<div class="a" style="left:1174px;top:842px;width:68px;height:1px;background:#bbb"></div>
<div class="a" style="left:1214px;top:838px;width:3px;height:8px;background:#555"></div>
<div class="a w" style="left:1244px;top:837px;font-size:9px;color:#666">+</div>
<div class="a w" style="left:1259px;top:838px;font-size:7px;color:#666">190 %</div>
<!-- taskbar -->
<div class="a" style="left:5px;top:850px;width:1277px;height:20px;background:#1a2436"></div>
<svg class="a" style="left:8px;top:853px" width="14" height="14" viewBox="0 0 14 14"><path d="M1.5 2.5 L6 1.8 V6.5 H1.5 Z M7 1.6 L12.5 0.8 V6.5 H7 Z M1.5 7.5 H6 V12.2 L1.5 11.5 Z M7 7.5 H12.5 V13.2 L7 12.4 Z" fill="#e8e8e8"/></svg>
<div class="a" style="left:225px;top:850px;width:25px;height:20px;background:#b86a3a"></div>
<div class="a" style="left:250px;top:850px;width:24px;height:20px;background:#3c4a60"></div>
<svg class="a" style="left:155px;top:852px" width="170" height="18" viewBox="0 0 170 18">
 <circle cx="8" cy="7.5" r="5" fill="#e04b3a"/><path d="M8 7.5 L12.3 10 A5 5 0 0 1 3.7 10 Z" fill="#2fa24f"/><path d="M8 7.5 L3.7 10 A5 5 0 0 1 8 2.5 Z" fill="#f5c518"/><circle cx="8" cy="7.5" r="2.2" fill="#fff"/><circle cx="8" cy="7.5" r="1.6" fill="#3f7be0"/>
 <path d="M27 4 H32 L33 5 H38 V12 H27 Z" fill="#f5c44a"/><rect x="29" y="8" width="8" height="4" fill="#2b88d8"/>
 <rect x="49" y="2" width="11" height="11" rx="1" fill="#a443c4"/><text x="50.5" y="10.5" font-size="7" fill="#fff" font-family="Liberation Sans" font-weight="bold">N</text>
 <rect x="72" y="2" width="11" height="11" rx="1" fill="#5b5fc7"/><text x="74.5" y="10.5" font-size="7" fill="#fff" font-family="Liberation Sans" font-weight="bold">T</text>
 <rect x="97" y="2" width="11" height="11" rx="1" fill="#2b66c4"/><text x="98.5" y="10.5" font-size="6.5" fill="#fff" font-family="Liberation Sans" font-weight="bold">W</text>
 <rect x="123" y="2" width="11" height="11" rx="1" fill="#d42020"/><path d="M125 11 C127 8 130 5 129 3 C128 5 130 9 133 10" fill="none" stroke="#fff" stroke-width="1"/>
 <rect x="147" y="2" width="11" height="11" rx="1" fill="#1d8a4a"/><text x="149" y="10.5" font-size="7" fill="#fff" font-family="Liberation Sans" font-weight="bold">X</text>
</svg>
<div class="a" style="left:183px;top:868px;width:14px;height:2px;background:#7ab4f0"></div>
<div class="a" style="left:204px;top:868px;width:14px;height:2px;background:#7ab4f0"></div>
<div class="a" style="left:225px;top:868px;width:25px;height:2px;background:#f07020"></div>
<div class="a" style="left:250px;top:868px;width:24px;height:2px;background:#7ab4f0"></div>
<div class="a" style="left:277px;top:868px;width:14px;height:2px;background:#7ab4f0"></div>
<div class="a" style="left:301px;top:868px;width:20px;height:2px;background:#7ab4f0"></div>
<div class="a w" style="left:1262px;top:856px;font-size:7.5px;color:#ddd">14:22</div>
<!-- name tag overlay -->
<div class="a" style="left:16px;top:846px;width:136px;height:30px;border-radius:6px;background:rgba(20,20,20,0.72)"></div>
<div class="a pre" style="left:23px;top:853.5px;font-size:15.2px;line-height:18px;color:#fff;transform:scaleX(0.862);transform-origin:0 0">REMY PERROT</div>
<svg class="a" style="left:128px;top:852px" width="18" height="18" viewBox="0 0 18 18">
 <rect x="6" y="2" width="5" height="8.5" rx="2.5" fill="#f4f4f4"/>
 <path d="M3.5 7.5 C3.5 11 5.8 12.8 8.5 12.8 C11.2 12.8 13.5 11 13.5 7.5 M8.5 12.8 V16" fill="none" stroke="#f4f4f4" stroke-width="1.2"/>
 <path d="M2 1.5 L16 16" stroke="#222" stroke-width="2.6"/><path d="M2.3 1.8 L15.7 15.7" stroke="#f4f4f4" stroke-width="1.2"/>
</svg>

<!-- RIGHT PANEL -->
<div class="a av" style="left:1325.8px;top:149.2px;width:89.5px;height:89.5px;background:#f6d8dc"></div>
<div class="a pre" style="left:1320.5px;top:176.9px;width:100px;text-align:center;font-size:32px;line-height:34px;color:#7c2d3d;letter-spacing:-1px;-webkit-text-stroke:0.5px currentColor">KP</div>
<div class="a nm" style="left:1312px;top:250.7px;font-size:15px;transform:scaleX(0.91);transform-origin:0 0">KR_Cheol-Ji...</div>
<svg class="a" style="left:1414px;top:249px" width="17" height="18" viewBox="0 0 17 18">
 <rect x="5.4" y="1" width="6" height="10.2" rx="3" fill="#f0f0f0"/>
 <path d="M3.4 8.8 C3.4 12.3 5.6 14 8.4 14 C11.2 14 13.4 12.3 13.4 8.8 M8.4 14 V16.5" fill="none" stroke="#f0f0f0" stroke-width="1.2"/>
 <path d="M1.3 1.3 L15.8 16" stroke="#1f1f1f" stroke-width="2.4"/><path d="M1.5 1.5 L15.6 15.8" stroke="#f0f0f0" stroke-width="1.2"/>
</svg>
<div class="a av" style="left:1465.5px;top:149.2px;width:89.5px;height:89.5px;background:#f6d6e2"></div>
<div class="a pre" style="left:1460.2px;top:176.9px;width:100px;text-align:center;font-size:32px;line-height:34px;color:#7a1f40;letter-spacing:-1px;-webkit-text-stroke:0.5px currentColor">CF</div>
<div class="a nm" style="left:1452px;top:250.7px;font-size:15px;transform:scaleX(0.977);transform-origin:0 0">Craig Fanning</div>
<svg class="a" style="left:1554px;top:249px" width="17" height="18" viewBox="0 0 17 18">
 <rect x="5.4" y="1" width="6" height="10.2" rx="3" fill="#f0f0f0"/>
 <path d="M3.4 8.8 C3.4 12.3 5.6 14 8.4 14 C11.2 14 13.4 12.3 13.4 8.8 M8.4 14 V16.5" fill="none" stroke="#f0f0f0" stroke-width="1.2"/>
 <path d="M1.3 1.3 L15.8 16" stroke="#1f1f1f" stroke-width="2.4"/><path d="M1.5 1.5 L15.6 15.8" stroke="#f0f0f0" stroke-width="1.2"/>
</svg>
<div class="a av" style="left:1325.8px;top:288.9px;width:89.5px;height:89.5px;background:#d0e3d7"></div>
<div class="a pre" style="left:1320.5px;top:316.6px;width:100px;text-align:center;font-size:32px;line-height:34px;color:#1d5631;letter-spacing:-1px;-webkit-text-stroke:0.5px currentColor">AL</div>
<div class="a nm" style="left:1328px;top:390.7px;font-size:15px;transform:scaleX(0.876);transform-origin:0 0">ARIEL LECCA</div>
<div class="a av" style="left:1465.5px;top:288.9px;width:89.5px;height:89.5px;background:#f6d8dc"></div>
<div class="a pre" style="left:1460.2px;top:316.6px;width:100px;text-align:center;font-size:32px;line-height:34px;color:#7c2d3d;letter-spacing:-1px;-webkit-text-stroke:0.5px currentColor">RP</div>
<div class="a nm" style="left:1452px;top:390.7px;font-size:15px;transform:scaleX(0.868);transform-origin:0 0">REMY PERR...</div>
<svg class="a" style="left:1554px;top:389px" width="17" height="18" viewBox="0 0 17 18">
 <rect x="5.4" y="1" width="6" height="10.2" rx="3" fill="#f0f0f0"/>
 <path d="M3.4 8.8 C3.4 12.3 5.6 14 8.4 14 C11.2 14 13.4 12.3 13.4 8.8 M8.4 14 V16.5" fill="none" stroke="#f0f0f0" stroke-width="1.2"/>
 <path d="M1.3 1.3 L15.8 16" stroke="#1f1f1f" stroke-width="2.4"/><path d="M1.5 1.5 L15.6 15.8" stroke="#f0f0f0" stroke-width="1.2"/>
</svg>
<div class="a av" style="left:1325.8px;top:428.1px;width:89.5px;height:89.5px;background:#ead2d6"></div>
<div class="a pre" style="left:1320.5px;top:455.9px;width:100px;text-align:center;font-size:32px;line-height:34px;color:#6b1e2b;letter-spacing:-1px;-webkit-text-stroke:0.5px currentColor">RK</div>
<div class="a nm" style="left:1312px;top:530.7px;font-size:15px;transform:scaleX(0.892);transform-origin:0 0">ROBERT KA...</div>
<svg class="a" style="left:1414px;top:529px" width="17" height="18" viewBox="0 0 17 18">
 <rect x="5.4" y="1" width="6" height="10.2" rx="3" fill="#f0f0f0"/>
 <path d="M3.4 8.8 C3.4 12.3 5.6 14 8.4 14 C11.2 14 13.4 12.3 13.4 8.8 M8.4 14 V16.5" fill="none" stroke="#f0f0f0" stroke-width="1.2"/>
 <path d="M1.3 1.3 L15.8 16" stroke="#1f1f1f" stroke-width="2.4"/><path d="M1.5 1.5 L15.6 15.8" stroke="#f0f0f0" stroke-width="1.2"/>
</svg>
<div class="a av" style="left:1465.5px;top:428.1px;width:89.5px;height:89.5px;background:#d0e3d7"></div>
<div class="a pre" style="left:1460.2px;top:455.9px;width:100px;text-align:center;font-size:32px;line-height:34px;color:#1d5631;letter-spacing:-1px;-webkit-text-stroke:0.5px currentColor">MA</div>
<div class="a nm" style="left:1452px;top:530.7px;font-size:15px;transform:scaleX(0.996);transform-origin:0 0">Aidam, Mar...</div>
<svg class="a" style="left:1554px;top:529px" width="17" height="18" viewBox="0 0 17 18">
 <rect x="5.4" y="1" width="6" height="10.2" rx="3" fill="#f0f0f0"/>
 <path d="M3.4 8.8 C3.4 12.3 5.6 14 8.4 14 C11.2 14 13.4 12.3 13.4 8.8 M8.4 14 V16.5" fill="none" stroke="#f0f0f0" stroke-width="1.2"/>
 <path d="M1.3 1.3 L15.8 16" stroke="#1f1f1f" stroke-width="2.4"/><path d="M1.5 1.5 L15.6 15.8" stroke="#f0f0f0" stroke-width="1.2"/>
</svg>
<div class="a av" style="left:1325.8px;top:571.1px;width:89.4px;height:89.4px;background:#979797"></div>
<svg class="a" style="left:1345.5px;top:590.8px" width="50" height="50" viewBox="0 0 50 50">
 <circle cx="25" cy="13.8" r="10.2" fill="none" stroke="#fff" stroke-width="2.2"/>
 <path d="M10 29.5 H40 A4 4 0 0 1 44 33.5 C44 40 36 46 25 46 C14 46 6 40 6 33.5 A4 4 0 0 1 10 29.5 Z" fill="none" stroke="#fff" stroke-width="2.2"/>
</svg>
<div class="a nm" style="left:1312px;top:672.7px;font-size:15px;transform:scaleX(1.0);transform-origin:0 0">[Infineon] Fr...</div>
<svg class="a" style="left:1414px;top:671px" width="17" height="18" viewBox="0 0 17 18">
 <rect x="5.4" y="1" width="6" height="10.2" rx="3" fill="#f0f0f0"/>
 <path d="M3.4 8.8 C3.4 12.3 5.6 14 8.4 14 C11.2 14 13.4 12.3 13.4 8.8 M8.4 14 V16.5" fill="none" stroke="#f0f0f0" stroke-width="1.2"/>
 <path d="M1.3 1.3 L15.8 16" stroke="#1f1f1f" stroke-width="2.4"/><path d="M1.5 1.5 L15.6 15.8" stroke="#f0f0f0" stroke-width="1.2"/>
</svg>
<div class="a av" style="left:1465.8px;top:568.9px;width:88.8px;height:88.8px;background:#444342;border:1px solid #5a5856"></div>
<div class="a pre" style="left:1470.2px;top:604.3px;width:80px;text-align:center;font-size:17.5px;line-height:20px;color:#fff">+40</div>
<div class="a" style="left:1287px;top:717px;width:307px;height:168px;background:#313131"></div>
<div class="a av" style="left:1404.6px;top:765.8px;width:72px;height:72px;background:#fce9d6"></div>
<div class="a pre" style="left:1390.6px;top:788px;width:100px;text-align:center;font-size:26px;line-height:28px;color:#8b5a1c;letter-spacing:-0.5px;-webkit-text-stroke:0.5px currentColor">GJ</div>

</body></html>
